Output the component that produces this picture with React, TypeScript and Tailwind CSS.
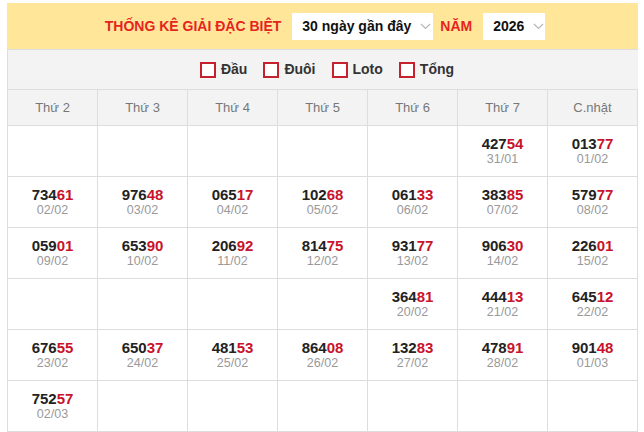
import React from "react";

type Draw = { num: string; date: string } | null;

const weeks: Draw[][] = [
  [null, null, null, null, null, { num: "42754", date: "31/01" }, { num: "01377", date: "01/02" }],
  [
    { num: "73461", date: "02/02" },
    { num: "97648", date: "03/02" },
    { num: "06517", date: "04/02" },
    { num: "10268", date: "05/02" },
    { num: "06133", date: "06/02" },
    { num: "38385", date: "07/02" },
    { num: "57977", date: "08/02" },
  ],
  [
    { num: "05901", date: "09/02" },
    { num: "65390", date: "10/02" },
    { num: "20692", date: "11/02" },
    { num: "81475", date: "12/02" },
    { num: "93177", date: "13/02" },
    { num: "90630", date: "14/02" },
    { num: "22601", date: "15/02" },
  ],
  [null, null, null, null, { num: "36481", date: "20/02" }, { num: "44413", date: "21/02" }, { num: "64512", date: "22/02" }],
  [
    { num: "67655", date: "23/02" },
    { num: "65037", date: "24/02" },
    { num: "48153", date: "25/02" },
    { num: "86408", date: "26/02" },
    { num: "13283", date: "27/02" },
    { num: "47891", date: "28/02" },
    { num: "90148", date: "01/03" },
  ],
  [{ num: "75257", date: "02/03" }, null, null, null, null, null, null],
];

const days = ["Thứ 2", "Thứ 3", "Thứ 4", "Thứ 5", "Thứ 6", "Thứ 7", "C.nhật"];
const filters = ["Đầu", "Đuôi", "Loto", "Tổng"];

function Chevron() {
  return (
    <svg width="11" height="7" viewBox="0 0 11 7" fill="none" className="ml-[9px]">
      <path d="M1 1l4.5 4.5L10 1" stroke="#b5b5b5" strokeWidth="1.1" />
    </svg>
  );
}

function Select({ label, className }: { label: string; className: string }) {
  return (
    <div className={`flex h-[27px] items-center bg-white pl-[10px] text-[14px] font-bold text-[#111] ${className}`}>
      <span>{label}</span>
      <Chevron />
    </div>
  );
}

export default function App() {
  return (
    <div className="ml-[7px] mt-[3px] w-[631px] font-['Liberation_Sans',Arial,sans-serif]">
      <div className="flex h-[46px] items-center justify-center bg-[#ffe699] pl-[5px]">
        <span className="text-[14px] font-bold text-[#e52421]">THỐNG KÊ GIẢI ĐẶC BIỆT</span>
        <Select label="30 ngày gần đây" className="ml-[11px] w-[141px]" />
        <span className="ml-[7px] text-[14px] font-bold text-[#e52421]">NĂM</span>
        <Select label="2026" className="ml-[11px] w-[62px]" />
      </div>
      <div className="flex h-[40px] items-center justify-center gap-[16px] border-t border-l border-[#ddd] bg-[#f3f3f3] pl-[8px]">
        {filters.map((f) => (
          <label key={f} className="flex items-center gap-[5px]">
            <span className="h-[16px] w-[16px] border-2 border-[#c5222d] bg-white" />
            <span className="text-[14px] font-bold text-[#333]">{f}</span>
          </label>
        ))}
      </div>
      <div className="grid grid-cols-7 border-t border-l border-[#ddd]">
        {days.map((d) => (
          <div key={d} className="flex h-[36px] items-center justify-center border-r border-b border-[#ddd] bg-[#f3f3f3] text-[13px] text-[#777]">
            {d}
          </div>
        ))}
        {weeks.flat().map((c, i) => (
          <div key={i} className="flex h-[51px] flex-col items-center justify-center border-r border-b border-[#ddd] bg-white pb-[1px]">
            {c && (
              <>
                <span className="text-[15px] leading-[17px] font-bold text-[#222]">
                  {c.num.slice(0, 3)}
                  <span className="text-[#c9132b]">{c.num.slice(3)}</span>
                </span>
                <span className="text-[12.5px] leading-[15px] text-[#999]">{c.date}</span>
              </>
            )}
          </div>
        ))}
      </div>
    </div>
  );
}
